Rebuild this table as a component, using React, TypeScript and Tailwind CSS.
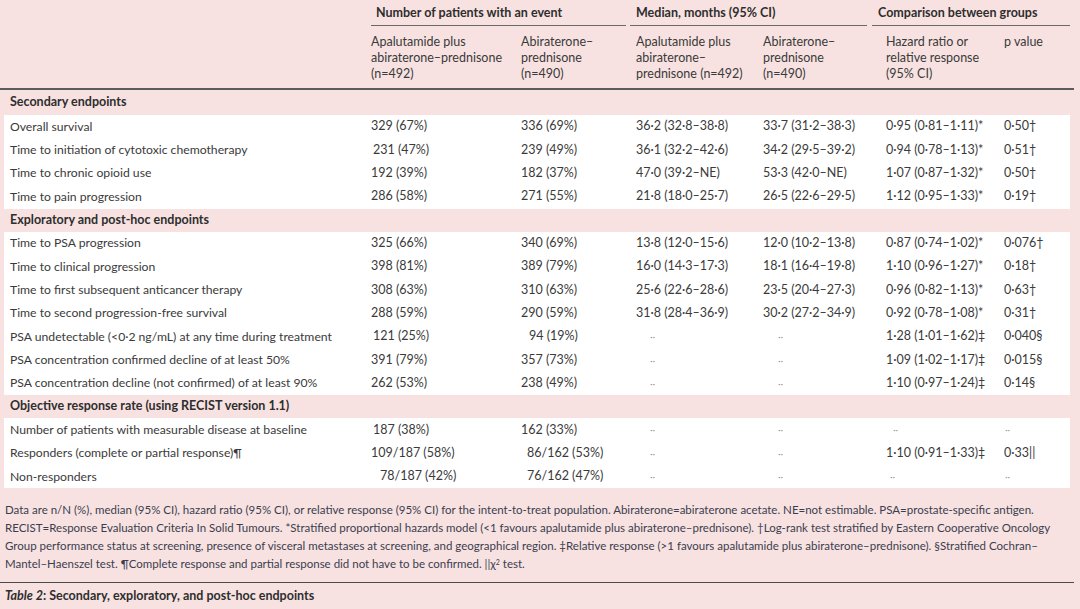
import React from 'react';

type Cell = string | { v: string; pad: string };

interface Row {
  label: string;
  cells: Cell[];
}

const DASH = '··';

const secondary: Row[] = [
  { label: 'Overall survival', cells: ['329 (67%)', '336 (69%)', '36·2 (32·8–38·8)', '33·7 (31·2–38·3)', '0·95 (0·81–1·11)*', '0·50†'] },
  { label: 'Time to initiation of cytotoxic chemotherapy', cells: [{ v: '231 (47%)', pad: 'pl-[8px]' }, '239 (49%)', '36·1 (32·2–42·6)', '34·2 (29·5–39·2)', '0·94 (0·78–1·13)*', '0·51†'] },
  { label: 'Time to chronic opioid use', cells: ['192 (39%)', '182 (37%)', '47·0 (39·2–NE)', '53·3 (42·0–NE)', '1·07 (0·87–1·32)*', '0·50†'] },
  { label: 'Time to pain progression', cells: ['286 (58%)', '271 (55%)', '21·8 (18·0–25·7)', '26·5 (22·6–29·5)', '1·12 (0·95–1·33)*', '0·19†'] },
];

const exploratory: Row[] = [
  { label: 'Time to PSA progression', cells: ['325 (66%)', '340 (69%)', '13·8 (12·0–15·6)', '12·0 (10·2–13·8)', '0·87 (0·74–1·02)*', '0·076†'] },
  { label: 'Time to clinical progression', cells: ['398 (81%)', '389 (79%)', '16·0 (14·3–17·3)', '18·1 (16·4–19·8)', '1·10 (0·96–1·27)*', '0·18†'] },
  { label: 'Time to first subsequent anticancer therapy', cells: ['308 (63%)', '310 (63%)', '25·6 (22·6–28·6)', '23·5 (20·4–27·3)', '0·96 (0·82–1·13)*', '0·63†'] },
  { label: 'Time to second progression-free survival', cells: ['288 (59%)', '290 (59%)', '31·8 (28·4–36·9)', '30·2 (27·2–34·9)', '0·92 (0·78–1·08)*', '0·31†'] },
  { label: 'PSA undetectable (<0·2 ng/mL) at any time during treatment', cells: [{ v: '121 (25%)', pad: 'pl-[8px]' }, { v: '94 (19%)', pad: 'pl-[14px]' }, { v: DASH, pad: 'pl-[20px]' }, { v: DASH, pad: 'pl-[21px]' }, '1·28 (1·01–1·62)‡', '0·040§'] },
  { label: 'PSA concentration confirmed decline of at least 50%', cells: ['391 (79%)', '357 (73%)', { v: DASH, pad: 'pl-[20px]' }, { v: DASH, pad: 'pl-[21px]' }, '1·09 (1·02–1·17)‡', '0·015§'] },
  { label: 'PSA concentration decline (not confirmed) of at least 90%', cells: ['262 (53%)', '238 (49%)', { v: DASH, pad: 'pl-[20px]' }, { v: DASH, pad: 'pl-[21px]' }, '1·10 (0·97–1·24)‡', '0·14§'] },
];

const objective: Row[] = [
  { label: 'Number of patients with measurable disease at baseline', cells: [{ v: '187 (38%)', pad: 'pl-[8px]' }, '162 (33%)', { v: DASH, pad: 'pl-[20px]' }, { v: DASH, pad: 'pl-[21px]' }, { v: DASH, pad: 'pl-[13px]' }, { v: DASH, pad: 'pl-[7px]' }] },
  { label: 'Responders (complete or partial response)¶', cells: ['109/187 (58%)', { v: '86/162 (53%)', pad: 'pl-[12px]' }, { v: DASH, pad: 'pl-[20px]' }, { v: DASH, pad: 'pl-[21px]' }, '1·10 (0·91–1·33)‡', '0·33||'] },
  { label: 'Non-responders', cells: [{ v: '78/187 (42%)', pad: 'pl-[15px]' }, { v: '76/162 (47%)', pad: 'pl-[12px]' }, { v: DASH, pad: 'pl-[20px]' }, { v: DASH, pad: 'pl-[21px]' }, { v: DASH, pad: 'pl-[10px]' }, { v: DASH, pad: 'pl-[7px]' }] },
];

const grid = 'grid grid-cols-[361px_150px_115px_127px_123px_118px_1fr]';

function DataCell({ cell }: { cell: Cell }) {
  const v = typeof cell === 'string' ? cell : cell.v;
  const pad = typeof cell === 'string' ? 'pl-[6px]' : cell.pad;
  return (
    <div className={`${pad} whitespace-nowrap ${v === DASH ? 'text-[#9b9b9b] text-[10px]' : ''}`}>{v}</div>
  );
}

function Block({ rows }: { rows: Row[] }) {
  return (
    <div className="bg-white">
      {rows.map((r) => (
        <div key={r.label} className={`${grid} h-[23.4px] items-center`}>
          <div className="pl-[6px] whitespace-nowrap text-[12.2px]">{r.label}</div>
          {r.cells.map((c, i) => (
            <DataCell key={i} cell={c} />
          ))}
        </div>
      ))}
    </div>
  );
}

function Section({ title, h }: { title: string; h: string }) {
  return <div className={`${h} flex items-center pl-[6px] font-bold text-[#2e2e2e]`}>{title}</div>;
}

export default function App() {
  return (
    <div className="w-[1080px] h-[609px] bg-[#f7e2e1] overflow-hidden font-['Lato','Noto_Sans',sans-serif] text-[12.5px] text-[#3a3a3a]">
      <div className="w-[1074px]">
        {/* column headers */}
        <div className="border-b-2 border-[#5c5c5c] px-[4px]">
          <div className="flex font-bold text-[#2e2e2e] leading-[16px]">
            <div className="w-[367px] shrink-0" />
            <div className="w-[255px] shrink-0 border-b-[1.5px] border-[#6a6a6a] pt-[5px] pb-[4px] pl-[5px]">Number of patients with an event</div>
            <div className="w-[4px] shrink-0" />
            <div className="w-[237px] shrink-0 border-b-[1.5px] border-[#6a6a6a] pt-[5px] pb-[4px] pl-[6px]">Median, months (95% CI)</div>
            <div className="w-[5px] shrink-0" />
            <div className="flex-1 border-b-[1.5px] border-[#6a6a6a] pt-[5px] pb-[4px] pl-[6px]">Comparison between groups</div>
          </div>
          <div className={`${grid} leading-[16px] pt-[8px] pb-[6px]`}>
            <div />
            <div className="pl-[6px] whitespace-nowrap">Apalutamide plus<br />abiraterone–prednisone<br />(n=492)</div>
            <div className="pl-[6px] whitespace-nowrap">Abiraterone–<br />prednisone<br />(n=490)</div>
            <div className="pl-[6px] whitespace-nowrap">Apalutamide plus<br />abiraterone–<br />prednisone (n=492)</div>
            <div className="pl-[6px] whitespace-nowrap">Abiraterone–<br />prednisone<br />(n=490)</div>
            <div className="pl-[6px] whitespace-nowrap">Hazard ratio or<br />relative response<br />(95% CI)</div>
            <div className="pl-[6px] whitespace-nowrap">p value</div>
          </div>
        </div>

        {/* body */}
        <div className="px-[4px]">
          <Section title="Secondary endpoints" h="h-[25px]" />
          <Block rows={secondary} />
          <Section title="Exploratory and post-hoc endpoints" h="h-[23px]" />
          <Block rows={exploratory} />
          <Section title="Objective response rate (using RECIST version 1.1)" h="h-[23px]" />
          <Block rows={objective} />
        </div>

        {/* footnotes */}
        <div className="pt-[13px] pb-[9px] pl-[5px] text-[11.5px] leading-[18px] text-[#3b3d4e] whitespace-nowrap">
          <div>Data are n/N (%), median (95% CI), hazard ratio (95% CI), or relative response (95% CI) for the intent-to-treat population. Abiraterone=abiraterone acetate. NE=not estimable. PSA=prostate-specific antigen.</div>
          <div>RECIST=Response Evaluation Criteria In Solid Tumours. *Stratified proportional hazards model (&lt;1 favours apalutamide plus abiraterone–prednisone). †Log-rank test stratified by Eastern Cooperative Oncology</div>
          <div>Group performance status at screening, presence of visceral metastases at screening, and geographical region. ‡Relative response (&gt;1 favours apalutamide plus abiraterone–prednisone). §Stratified Cochran–</div>
          <div>Mantel–Haenszel test. ¶Complete response and partial response did not have to be confirmed. ||χ<sup className="text-[7px]">2</sup> test.</div>
        </div>
        <div className="border-t-[1.5px] border-[#4a4a4a] pt-[4px] pl-[5px] leading-[17px] font-bold text-[#2e2e2e]">
          <span className="italic">Table 2</span>: Secondary, exploratory, and post-hoc endpoints
        </div>
      </div>
    </div>
  );
}
